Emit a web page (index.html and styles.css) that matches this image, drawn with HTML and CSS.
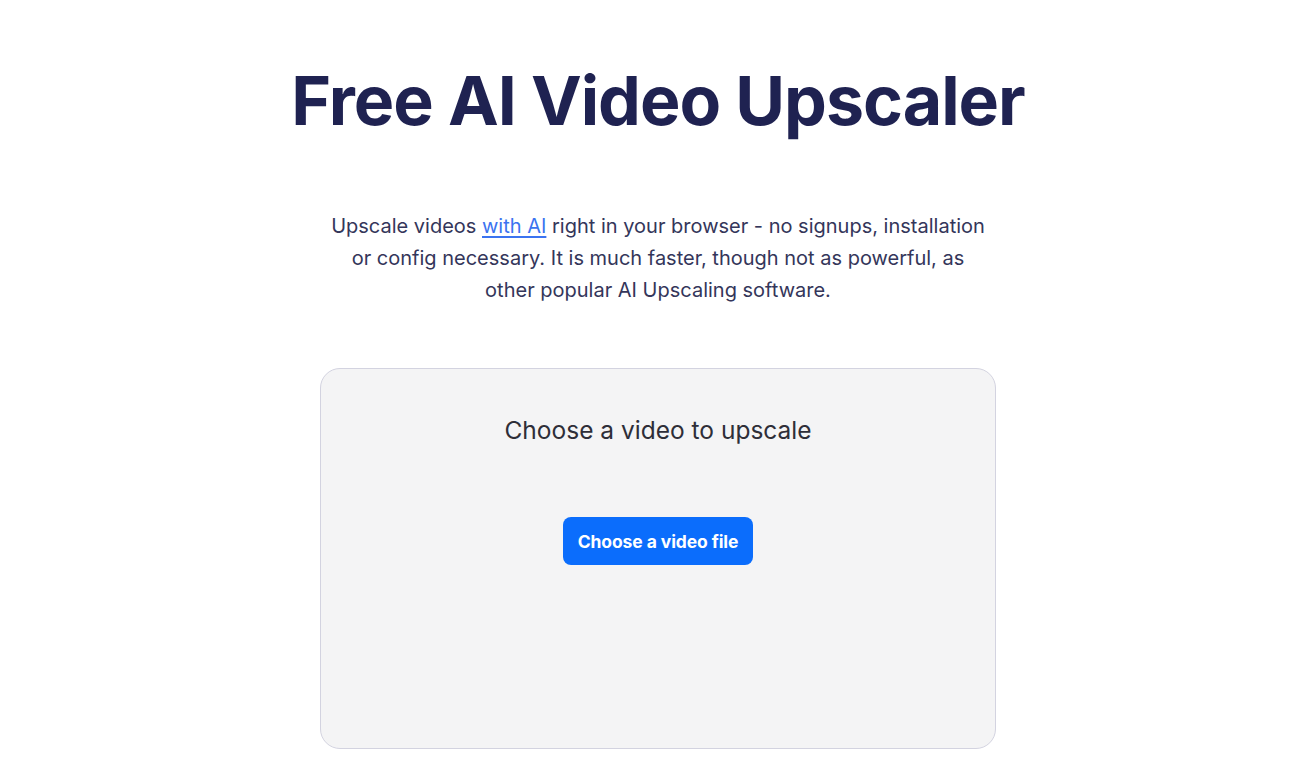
FILE: index.html
```html
<!DOCTYPE html>
<html lang="en">
<head>
<meta charset="utf-8">
<title>Free AI Video Upscaler</title>
<link rel="stylesheet" href="styles.css">
</head>
<body>
<main class="page">
  <h1 class="title">Free AI Video Upscaler</h1>
  <p class="intro">Upscale videos <a href="#" class="link">with AI</a> right in your browser - no signups, installation or config necessary. It is much faster, though not as powerful, as other popular AI Upscaling software.</p>
  <section class="card">
    <h2 class="card-title">Choose a video to upscale</h2>
    <button class="btn" type="button">Choose a video file</button>
  </section>
</main>
</body>
</html>
```
FILE: styles.css
```css
html, body {
  margin: 0;
  padding: 0;
  background: #ffffff;
}
body {
  font-family: Inter, "Noto Sans", "Liberation Sans", sans-serif;
  color: #2c2f4a;
}
.page {
  padding: 58px 0 0 15px;
  display: flex;
  flex-direction: column;
  align-items: center;
}
.title {
  margin: 0;
  font-size: 68px;
  line-height: 84px;
  font-weight: 700;
  color: #1f2251;
  letter-spacing: -1px;
}
.intro {
  margin: 68px 0 0;
  width: 664px;
  text-align: center;
  font-size: 20px;
  line-height: 32px;
  color: #34365a;
  font-weight: 400;
}
.link {
  color: #3b73f0;
  text-decoration: underline;
  text-underline-offset: 3px;
}
.card {
  margin-top: 62px;
  width: 674px;
  height: 379px;
  border: 1px solid #d3d3e0;
  border-radius: 20px;
  background: #f4f4f5;
  display: flex;
  flex-direction: column;
  align-items: center;
}
.card-title {
  margin: 43px 0 0;
  font-size: 24.5px;
  line-height: 36px;
  font-weight: 400;
  color: #2e2e38;
}
.btn {
  margin-top: 69px;
  width: 190px;
  height: 48px;
  border: none;
  border-radius: 8px;
  background: #0b6dfc;
  color: #ffffff;
  font-family: Inter, "Noto Sans", "Liberation Sans", sans-serif;
  font-size: 17.5px;
  font-weight: 700;
  letter-spacing: -0.1px;
}
```
